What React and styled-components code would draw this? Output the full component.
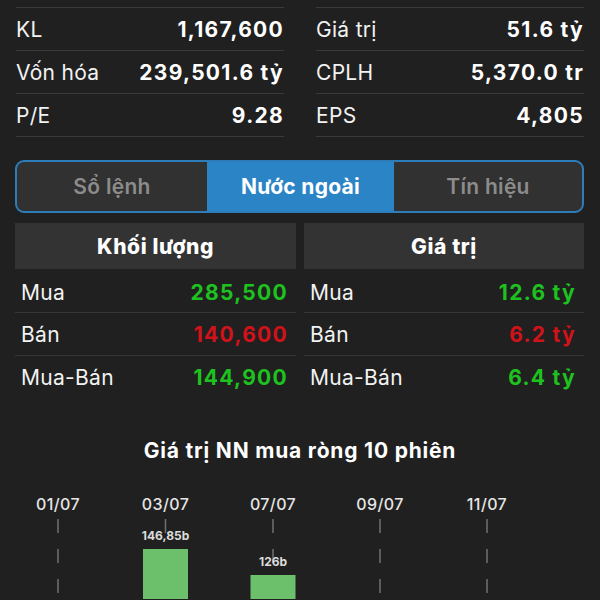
import React from "react";
import styled, { createGlobalStyle } from "styled-components";

const Global = createGlobalStyle`
  html, body { margin: 0; padding: 0; background: #202020; }
  body { font-family: Inter, "Noto Sans", sans-serif; color: #fff; width: 600px; height: 600px; overflow: hidden; }
`;

const Page = styled.div`
  width: 600px;
  height: 600px;
  background: #202020;
  padding-top: 7px;
  box-sizing: border-box;
`;

const StatsGrid = styled.div`
  display: grid;
  grid-template-columns: 268px 268px;
  column-gap: 32px;
  padding: 0 16px;
`;

const StatCol = styled.div`
  display: flex;
  flex-direction: column;
  border-top: 1px solid #3a3a3a;
`;

const StatRow = styled.div`
  height: 42px;
  display: flex;
  align-items: center;
  justify-content: space-between;
  border-bottom: 1px solid #3a3a3a;
  font-size: 21px;
`;

const Label = styled.span`
  font-weight: 400;
  color: #f2f2f2;
  letter-spacing: 0.3px;
`;

const Value = styled.span`
  font-weight: 700;
  color: ${(p) => p.$color || "#ffffff"};
  letter-spacing: 1.3px;
`;

const Tabs = styled.div`
  margin: 23px 16px 0 15px;
  height: 53px;
  box-sizing: border-box;
  border: 2px solid #2d7dba;
  border-radius: 9px;
  overflow: hidden;
  display: grid;
  grid-template-columns: 190px 187px 1fr;
  background: #313131;
`;

const Tab = styled.div`
  display: flex;
  align-items: center;
  justify-content: center;
  font-size: 21px;
  letter-spacing: 0.3px;
  font-weight: ${(p) => (p.$active ? 700 : 600)};
  color: ${(p) => (p.$active ? "#ffffff" : "#8c8c8c")};
  background: ${(p) => (p.$active ? "#2b84c6" : "transparent")};
`;

const Tables = styled.div`
  display: grid;
  grid-template-columns: 281px 280px;
  column-gap: 8px;
  margin: 10px 16px 0 15px;
`;

const Table = styled.div`
  display: flex;
  flex-direction: column;
`;

const TableHead = styled.div`
  height: 46px;
  background: #333333;
  display: flex;
  align-items: center;
  justify-content: center;
  font-size: 21px;
  font-weight: 800;
  letter-spacing: 0.6px;
  color: #fff;
`;

const TableRow = styled.div`
  height: ${(p) => (p.$first ? 44 : 43)}px;
  padding: ${(p) => (p.$first ? "3px 8px 0 6px" : "0 8px 0 6px")};
  box-sizing: border-box;
  display: flex;
  align-items: center;
  justify-content: space-between;
  border-bottom: ${(p) => (p.$last ? "none" : "1px solid #363636")};
  font-size: 21px;
`;

const ChartTitle = styled.div`
  margin-top: 40px;
  height: 24px;
  line-height: 24px;
  text-align: center;
  font-size: 21px;
  font-weight: 700;
  letter-spacing: 0.8px;
  color: #fff;
`;

const ChartSvg = styled.svg`
  display: block;
  margin-top: 16px;
`;

const GREEN = "#1ec21f";
const RED = "#d2121a";

const stats = [
  [
    ["KL", "1,167,600"],
    ["Vốn hóa", "239,501.6 tỷ"],
    ["P/E", "9.28"],
  ],
  [
    ["Giá trị", "51.6 tỷ"],
    ["CPLH", "5,370.0 tr"],
    ["EPS", "4,805"],
  ],
];

const foreign = [
  {
    title: "Khối lượng",
    rows: [
      ["Mua", "285,500", GREEN],
      ["Bán", "140,600", RED],
      ["Mua-Bán", "144,900", GREEN],
    ],
  },
  {
    title: "Giá trị",
    rows: [
      ["Mua", "12.6 tỷ", GREEN],
      ["Bán", "6.2 tỷ", RED],
      ["Mua-Bán", "6.4 tỷ", GREEN],
    ],
  },
];

const dates = [
  { x: 58, label: "01/07" },
  { x: 165.5, label: "03/07", bar: { top: 70, text: "146,85b" } },
  { x: 273, label: "07/07", bar: { top: 96, text: "126b" } },
  { x: 380, label: "09/07" },
  { x: 487, label: "11/07" },
];

function Chart() {
  return (
    <ChartSvg width="600" height="120" viewBox="0 0 600 120">
      {dates.map((d) => (
        <g key={d.label}>
          <text
            x={d.x}
            y={31}
            textAnchor="middle"
            fill="#e6e6e6"
            fontSize="16"
            letterSpacing="0.4"
            fontFamily="Inter, sans-serif"
            fontWeight="500"
          >
            {d.label}
          </text>
          <line
            x1={d.x}
            x2={d.x}
            y1={40}
            y2={120}
            stroke="#707070"
            strokeWidth="1.5"
            strokeDasharray="14 16"
          />
        </g>
      ))}
      {dates
        .filter((d) => d.bar)
        .map((d) => (
          <g key={d.label + "b"}>
            <rect x={d.x - 22.5} y={d.bar.top} width="45" height={120 - d.bar.top} fill="#6cc06b" />
            <text
              x={d.x}
              y={d.bar.top - 9}
              textAnchor="middle"
              fill="#dcdcdc"
              fontSize="12"
              fontWeight="700"
              fontFamily="Inter, sans-serif"
            >
              {d.bar.text}
            </text>
          </g>
        ))}
    </ChartSvg>
  );
}

export default function App() {
  return (
    <Page>
      <Global />
      <StatsGrid>
        {stats.map((col, i) => (
          <StatCol key={i}>
            {col.map(([l, v]) => (
              <StatRow key={l}>
                <Label>{l}</Label>
                <Value>{v}</Value>
              </StatRow>
            ))}
          </StatCol>
        ))}
      </StatsGrid>
      <Tabs>
        <Tab>Sổ lệnh</Tab>
        <Tab $active>Nước ngoài</Tab>
        <Tab>Tín hiệu</Tab>
      </Tabs>
      <Tables>
        {foreign.map((t) => (
          <Table key={t.title}>
            <TableHead>{t.title}</TableHead>
            {t.rows.map(([l, v, c], i) => (
              <TableRow key={l} $first={i === 0} $last={i === t.rows.length - 1}>
                <Label>{l}</Label>
                <Value $color={c}>{v}</Value>
              </TableRow>
            ))}
          </Table>
        ))}
      </Tables>
      <ChartTitle>Giá trị NN mua ròng 10 phiên</ChartTitle>
      <Chart />
    </Page>
  );
}
